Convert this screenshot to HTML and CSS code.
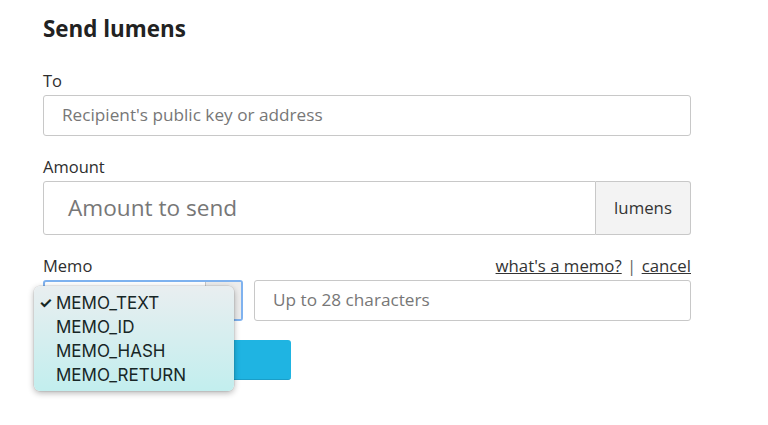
FILE: index.html
```html
<!DOCTYPE html>
<html>
<head>
<meta charset="utf-8">
<link rel="stylesheet" href="styles.css">
</head>
<body>
<div class="page">
  <h2 class="title">Send lumens</h2>
  <div class="field">
    <label class="label">To</label>
    <div class="input"><span class="ph">Recipient's public key or address</span></div>
  </div>
  <div class="field">
    <label class="label">Amount</label>
    <div class="group">
      <div class="input big"><span class="ph">Amount to send</span></div>
      <div class="addon">lumens</div>
    </div>
  </div>
  <div class="field memo">
    <div class="label-row">
      <label class="label">Memo</label>
      <div class="links"><a>what's a memo?</a> <span class="sep">|</span> <a>cancel</a></div>
    </div>
    <div class="memo-row">
      <div class="select"><div class="select-main"></div><div class="select-arrow"></div></div>
      <div class="input memo-input"><span class="ph">Up to 28 characters</span></div>
    </div>
    <div class="dropdown">
      <div class="opt"><span class="check">✓</span>MEMO_TEXT</div>
      <div class="opt">MEMO_ID</div>
      <div class="opt">MEMO_HASH</div>
      <div class="opt">MEMO_RETURN</div>
    </div>
  </div>
  <div class="btn"></div>
</div>
</body>
</html>
```
FILE: styles.css
```css
html, body { margin: 0; padding: 0; background: #fff; }
body { font-family: "Open Sans", "DejaVu Sans", sans-serif; color: #333; min-height: 425px; }
.page { width: 648px; padding: 14px 0 40px 43px; }
.title { margin: 0 0 27px; font-size: 22.4px; line-height: 30px; font-weight: 700; color: #222; }
.field { margin-bottom: 21px; }
.label { display: block; font-size: 16.5px; line-height: 20px; margin-bottom: 4px; color: #2e2e2e; }
.input { box-sizing: border-box; height: 41px; border: 1px solid #c8c8c8; border-radius: 3px; background: #fff; display: flex; align-items: center; padding: 0 0 2px 18px; }
.ph { color: #777; font-size: 17.2px; }
.group { display: flex; height: 54px; }
.input.big { flex: 1; height: 54px; border-radius: 3px 0 0 3px; padding-left: 24px; }
.input.big .ph { font-size: 22.6px; }
.addon { width: 95px; box-sizing: border-box; border: 1px solid #c8c8c8; border-left: none; border-radius: 0 3px 3px 0; background: #f3f3f3; display: flex; align-items: center; justify-content: center; padding-bottom: 2px; font-size: 16.8px; color: #333; }
.memo { position: relative; margin-bottom: 19px; }
.label-row { display: flex; justify-content: space-between; align-items: flex-end; }
.links { font-size: 16.8px; line-height: 20px; margin-bottom: 4px; color: #333; }
.links a { text-decoration: underline; color: #333; }
.sep { color: #666; padding: 0 1px; }
.memo-row { display: flex; gap: 11px; }
.select { box-sizing: border-box; width: 200px; height: 41px; border: 2px solid #7fb2ef; border-radius: 3px; display: flex; background: #fff; }
.select-main { flex: 1; border-right: 1px solid #c8c8c8; }
.select-arrow { width: 35px; background: #ececec; }
.memo-input { flex: 1; }
.dropdown { position: absolute; left: -9px; top: 30px; width: 200px; box-sizing: border-box; padding: 5px 0 4px; border-radius: 6px; background: linear-gradient(#e9eef0, #c2eeee); box-shadow: 0 2px 6px rgba(0,0,0,0.3), 0 0 0 0.5px rgba(0,0,0,0.12); font-family: Inter, Roboto, sans-serif; z-index: 2; }
.opt { position: relative; padding-left: 22px; font-size: 17px; line-height: 24px; color: #172626; }
.check { position: absolute; left: 5px; font-size: 15px; font-weight: 700; }
.btn { width: 248px; height: 40px; border-radius: 3px; background: #1fb4e2; border-bottom: 1px solid #1a9ec8; box-sizing: border-box; }
```
